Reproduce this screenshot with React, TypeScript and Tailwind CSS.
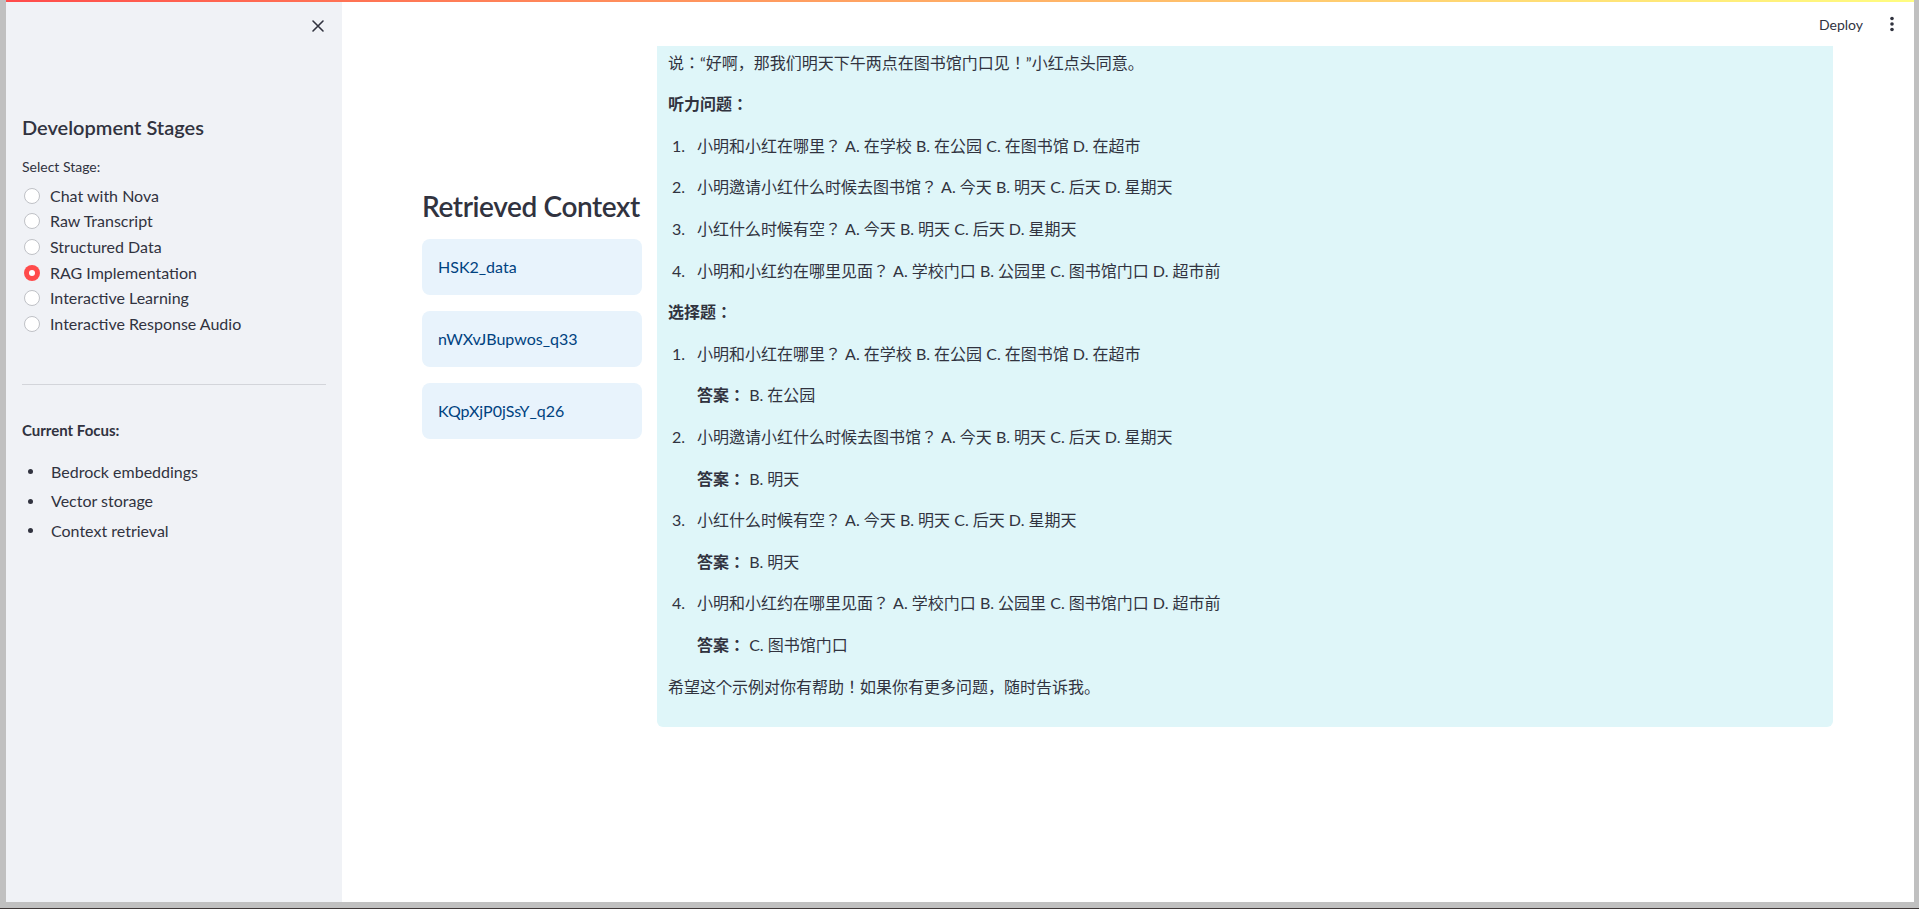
import React from 'react';

const stages = [
  'Chat with Nova',
  'Raw Transcript',
  'Structured Data',
  'RAG Implementation',
  'Interactive Learning',
  'Interactive Response Audio',
];

const focus = ['Bedrock embeddings', 'Vector storage', 'Context retrieval'];

const sources = ['HSK2_data', 'nWXvJBupwos_q33', 'KQpXjP0jSsY_q26'];

const listening = [
  '小明和小红在哪里？ A. 在学校 B. 在公园 C. 在图书馆 D. 在超市',
  '小明邀请小红什么时候去图书馆？ A. 今天 B. 明天 C. 后天 D. 星期天',
  '小红什么时候有空？ A. 今天 B. 明天 C. 后天 D. 星期天',
  '小明和小红约在哪里见面？ A. 学校门口 B. 公园里 C. 图书馆门口 D. 超市前',
];

const answers = ['B. 在公园', 'B. 明天', 'B. 明天', 'C. 图书馆门口'];

function Radio({ checked }: { checked: boolean }) {
  if (checked) {
    return (
      <span className="w-4 h-4 rounded-full bg-[#ff4b4b] flex items-center justify-center shrink-0">
        <span className="w-[6px] h-[6px] rounded-full bg-white" />
      </span>
    );
  }
  return <span className="w-4 h-4 rounded-full border border-[#bfc1c6] bg-white shrink-0" />;
}

function Sidebar() {
  return (
    <aside className="w-[336px] shrink-0 bg-[#f0f2f6] flex flex-col text-[#31333f]">
      <div className="h-12 flex items-center justify-end pr-[17px]">
        <svg width="14" height="14" viewBox="0 0 14 14" fill="none">
          <path d="M2 2L12 12M12 2L2 12" stroke="#31333f" strokeWidth="1.6" strokeLinecap="round" />
        </svg>
      </div>

      <div className="px-4">
        <h3 className="mt-[65px] text-[20px] leading-[24px] font-semibold">Development Stages</h3>
        <p className="mt-[18px] text-[14px] leading-[20px]">Select Stage:</p>

        <div className="mt-[6px] flex flex-col">
          {stages.map((s) => (
            <div key={s} className="h-[25.6px] flex items-center gap-[10px] pl-[2px]">
              <Radio checked={s === 'RAG Implementation'} />
              <span className="text-[16px] leading-[24px]">{s}</span>
            </div>
          ))}
        </div>

        <div className="mt-[47px] h-px bg-[#d3d5da]" />

        <p className="mt-[35px] text-[15px] leading-[20px] font-bold">Current Focus:</p>

        <ul className="mt-[20px] flex flex-col gap-[5.5px]">
          {focus.map((f) => (
            <li key={f} className="flex items-center h-[24px] text-[16px]">
              <span className="w-[29px] pl-[6px] flex">
                <span className="w-[5px] h-[5px] rounded-full bg-[#31333f]" />
              </span>
              {f}
            </li>
          ))}
        </ul>
      </div>
    </aside>
  );
}

function Answer({ n, q, a }: { n: number; q: string; a?: string }) {
  return (
    <>
      <div className="flex mb-4">
        <span className="w-[29px] pl-[4px] shrink-0">{n}.</span>
        <span>{q}</span>
      </div>
      {a && (
        <div className="pl-[29px] mb-4">
          <span className="font-bold">答案：</span> {a}
        </div>
      )}
    </>
  );
}

export default function App() {
  return (
    <div className="w-full h-screen bg-[#c0c0c0] overflow-hidden flex flex-col font-['Lato','Noto_Sans_CJK_JP',sans-serif]">
      <div className="ml-[6px] mr-[5px] h-[902px] flex flex-col">
        <div className="h-[2px] bg-linear-to-r from-[#ff4b4b] to-[#fffd80] shrink-0" />
        <div className="flex flex-1 min-h-0">
          <Sidebar />

          <main className="flex-1 min-w-0 bg-white flex flex-col text-[#31333f]">
            <header className="h-[44px] shrink-0 flex items-center justify-end pr-4">
              <span className="text-[14px]">Deploy</span>
              <svg className="ml-[23px]" width="12" height="18" viewBox="0 0 12 18">
                <circle cx="6" cy="3.5" r="1.8" fill="#31333f" />
                <circle cx="6" cy="9" r="1.8" fill="#31333f" />
                <circle cx="6" cy="14.5" r="1.8" fill="#31333f" />
              </svg>
            </header>

            <div className="flex-1 min-h-0 overflow-hidden flex items-start pl-[80px]">
              <div className="w-[220px] shrink-0 pt-[143px]">
                <h2 className="text-[28px] leading-[34px] font-semibold whitespace-nowrap tracking-[-0.4px]">Retrieved Context</h2>
                <div className="mt-4 flex flex-col gap-4">
                  {sources.map((s) => (
                    <div key={s} className="h-[56px] rounded-lg bg-[#e8f3fc] text-[#004280] text-[16px] flex items-center px-4">
                      {s}
                    </div>
                  ))}
                </div>
              </div>

              <div className="ml-[15px] w-[1176px] shrink-0 -mt-[22px] bg-[#dff6f9] rounded-b-md px-[11px] pb-7 text-[16px] leading-[25.6px]">
                <div className="mb-4">
                  <div className="h-[25.6px] overflow-hidden text-clip">
                    小明问小红：“你明天有空吗？我们一起去图书馆看书吧。”小红想了想，说：“明天上午我要上课，下午两点以后有空。”
                  </div>
                  <div>说：“好啊，那我们明天下午两点在图书馆门口见！”小红点头同意。</div>
                </div>

                <p className="mb-4 font-bold">听力问题：</p>
                {listening.map((q, i) => (
                  <Answer key={q} n={i + 1} q={q} />
                ))}

                <p className="mb-4 font-bold">选择题：</p>
                {listening.map((q, i) => (
                  <Answer key={q} n={i + 1} q={q} a={answers[i]} />
                ))}

                <p>希望这个示例对你有帮助！如果你有更多问题，随时告诉我。</p>
              </div>
            </div>
          </main>
        </div>
      </div>
      <div className="flex-1" />
      <div className="h-px bg-[#3f3838]" />
    </div>
  );
}
